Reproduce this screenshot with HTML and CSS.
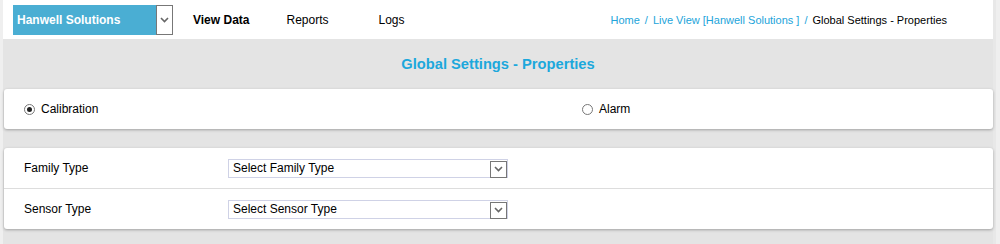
FILE: index.html
```html
<!DOCTYPE html>
<html lang="en">
<head>
    <meta charset="UTF-8">
    <title>Global Settings - Properties</title>
    <link rel="stylesheet" href="styles.css">
</head>
<body>
    <div class="page">
        <!-- top bar -->
        <div class="topbar">
            <div class="company">
                <span class="company-name">Hanwell Solutions</span>
                <span class="company-arrow"><svg width="9" height="6" viewBox="0 0 9 6"><path d="M1 1 L4.5 4.5 L8 1" fill="none" stroke="#666" stroke-width="1.6"/></svg></span>
            </div>
            <nav class="menu">
                <a class="active">View Data</a>
                <a>Reports</a>
                <a>Logs</a>
            </nav>
            <div class="crumbs">
                <a>Home</a><span class="sep">/</span><a>Live View [Hanwell Solutions ]</a><span class="sep">/</span><span class="current">Global Settings - Properties</span>
            </div>
        </div>

        <h1 class="title">Global Settings - Properties</h1>

        <!-- mode -->
        <div class="panel mode">
            <label class="radio"><span class="dot checked"></span>Calibration</label>
            <label class="radio"><span class="dot"></span>Alarm</label>
        </div>

        <!-- filters -->
        <div class="panel">
            <div class="row">
                <span class="label">Family Type</span>
                <div class="select">
                    <span>Select Family Type</span>
                    <span class="arrow"><svg width="9" height="6" viewBox="0 0 9 6"><path d="M1 1 L4.5 4.5 L8 1" fill="none" stroke="#666" stroke-width="1.6"/></svg></span>
                </div>
            </div>
            <div class="row">
                <span class="label">Sensor Type</span>
                <div class="select">
                    <span>Select Sensor Type</span>
                    <span class="arrow"><svg width="9" height="6" viewBox="0 0 9 6"><path d="M1 1 L4.5 4.5 L8 1" fill="none" stroke="#666" stroke-width="1.6"/></svg></span>
                </div>
            </div>
        </div>
    </div>
</body>
</html>
```

FILE: styles.css
```css
body {
    margin: 0;
    font-family: "Liberation Sans", Arial, sans-serif;
    font-size: 12px;
    color: #000;
    background: #efefef;
}
.page {
    margin-left: 3px;
    width: 990px;
    height: 244px;
    background: #e4e4e4;
    border-right: 3px solid #e8e8e8;
}
/* top bar */
.topbar {
    height: 39px;
    background: #fff;
    display: flex;
    align-items: center;
}
.company {
    display: flex;
    margin-left: 10px;
    height: 30px;
}
.company-name {
    width: 143px;
    background: #4aaed3;
    color: #fff;
    font-weight: bold;
    padding-left: 4px;
    box-sizing: border-box;
    display: flex;
    align-items: center;
}
.company-arrow {
    width: 17px;
    border: 1px solid #777;
    box-sizing: border-box;
    display: flex;
    align-items: center;
    justify-content: center;
}
.menu {
    display: flex;
    margin-left: 20px;
}
.menu a {
    margin-right: 37px;
}
.menu a:nth-child(2) {
    margin-right: 50px;
}
.menu a.active {
    font-weight: bold;
}
.crumbs {
    margin-left: auto;
    margin-right: 46px;
    font-size: 11px;
}
.crumbs a {
    color: #22a4da;
}
.crumbs .sep {
    color: #22a4da;
    margin: 0 5px;
}
/* title */
.title {
    margin: 0;
    height: 50px;
    line-height: 50px;
    text-align: center;
    font-size: 14.7px;
    color: #1ca8dc;
}
/* panels */
.panel {
    margin: 0 0 19px 1px;
    background: #fff;
    border-radius: 3px;
    box-shadow: 0 1px 3px rgba(0, 0, 0, 0.3);
}
.mode {
    height: 40px;
    display: flex;
    align-items: center;
    padding-left: 20px;
}
.radio {
    display: flex;
    align-items: center;
    flex-shrink: 0;
}
.radio:first-child {
    width: 558px;
}
.dot {
    width: 11px;
    height: 11px;
    border: 1px solid #777;
    border-radius: 50%;
    box-sizing: border-box;
    margin-right: 6px;
    position: relative;
    background: #fff;
}
.dot.checked::after {
    content: "";
    position: absolute;
    left: 2px;
    top: 2px;
    width: 5px;
    height: 5px;
    border-radius: 50%;
    background: #222;
}
.row {
    height: 40px;
    display: flex;
    align-items: center;
    padding-left: 20px;
}
.row + .row {
    border-top: 1px solid #ddd;
}
.label {
    width: 204px;
}
.select {
    width: 280px;
    height: 19px;
    border: 1px solid #cfd2e6;
    box-sizing: border-box;
    display: flex;
    align-items: center;
    justify-content: space-between;
    padding-left: 4px;
}
.arrow {
    width: 17px;
    height: 17px;
    border: 1px solid #777;
    box-sizing: border-box;
    margin-top: 2px;
    display: flex;
    align-items: center;
    justify-content: center;
}
```
